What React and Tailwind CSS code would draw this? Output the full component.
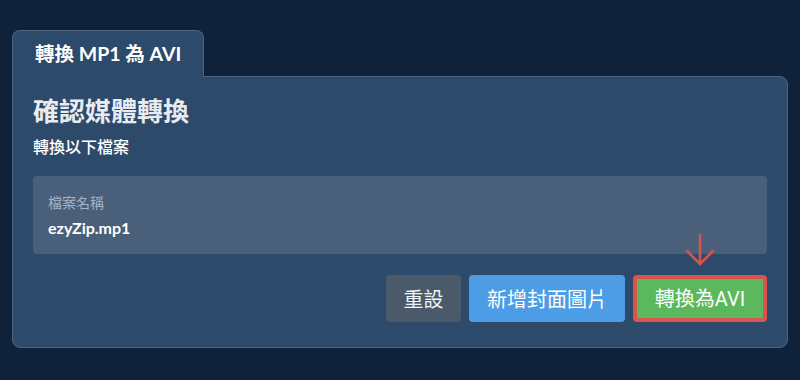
export default function App() {
  const font = { fontFamily: 'Lato, "Noto Sans CJK TC", sans-serif' };
  return (
    <div className="w-[800px] h-[380px] bg-[#0f2239] pt-[30px] px-[12px]" style={font}>
      <div className="flex">
        <div className="relative z-10 h-[47px] -mb-px w-[192px] bg-[#2d4a6a] border border-b-0 border-[#4b6384] rounded-t-lg flex items-center pl-[22px] text-white font-bold text-[19.5px]">
          轉換 MP1 為 AVI
        </div>
      </div>
      <div className="w-[776px] bg-[#2d4a6a] border border-[#4b6384] rounded-b-lg rounded-tr-lg px-[20px] pt-[18px] pb-[25px]">
        <h1 className="text-[26px] font-bold text-[#e8ecf1] leading-[32px]">確認媒體轉換</h1>
        <p className="text-[16px] text-white mt-[8px] leading-[24px] font-medium">轉換以下檔案</p>
        <div className="mt-[17px] h-[78px] bg-[#4a5f79] rounded-[4px] px-[15px] pt-[17px]">
          <div className="text-[14px] text-[#a8b3c1] leading-[20px]">檔案名稱</div>
          <div className="text-[16px] font-bold text-white leading-[20px] mt-[5px]">ezyZip.mp1</div>
        </div>
        <div className="flex justify-end gap-[8px] mt-[21px]">
          <button className="h-[47px] w-[75px] rounded-[4px] bg-[#4a5a6a] text-[#f1f3f5] text-[20px]">重設</button>
          <button className="h-[47px] w-[156px] rounded-[4px] bg-[#4d9de6] text-white text-[20px]">新增封面圖片</button>
          <div className="relative">
            <svg className="absolute left-[50px] -top-[42px]" width="34" height="34" viewBox="0 0 34 34" fill="none" stroke="#d9534f" strokeWidth="2.5" strokeLinecap="round">
              <path d="M17 2 V31" />
              <path d="M4 18 L17 31 L30 18" />
            </svg>
            <button className="h-[47px] w-[134px] rounded-[4px] bg-[#5cb85c] border-[4px] border-[#d9534f] text-white text-[20px]" style={{ fontFamily: 'Roboto, "Noto Sans CJK TC", sans-serif' }}>轉換為AVI</button>
          </div>
        </div>
      </div>
    </div>
  );
}
